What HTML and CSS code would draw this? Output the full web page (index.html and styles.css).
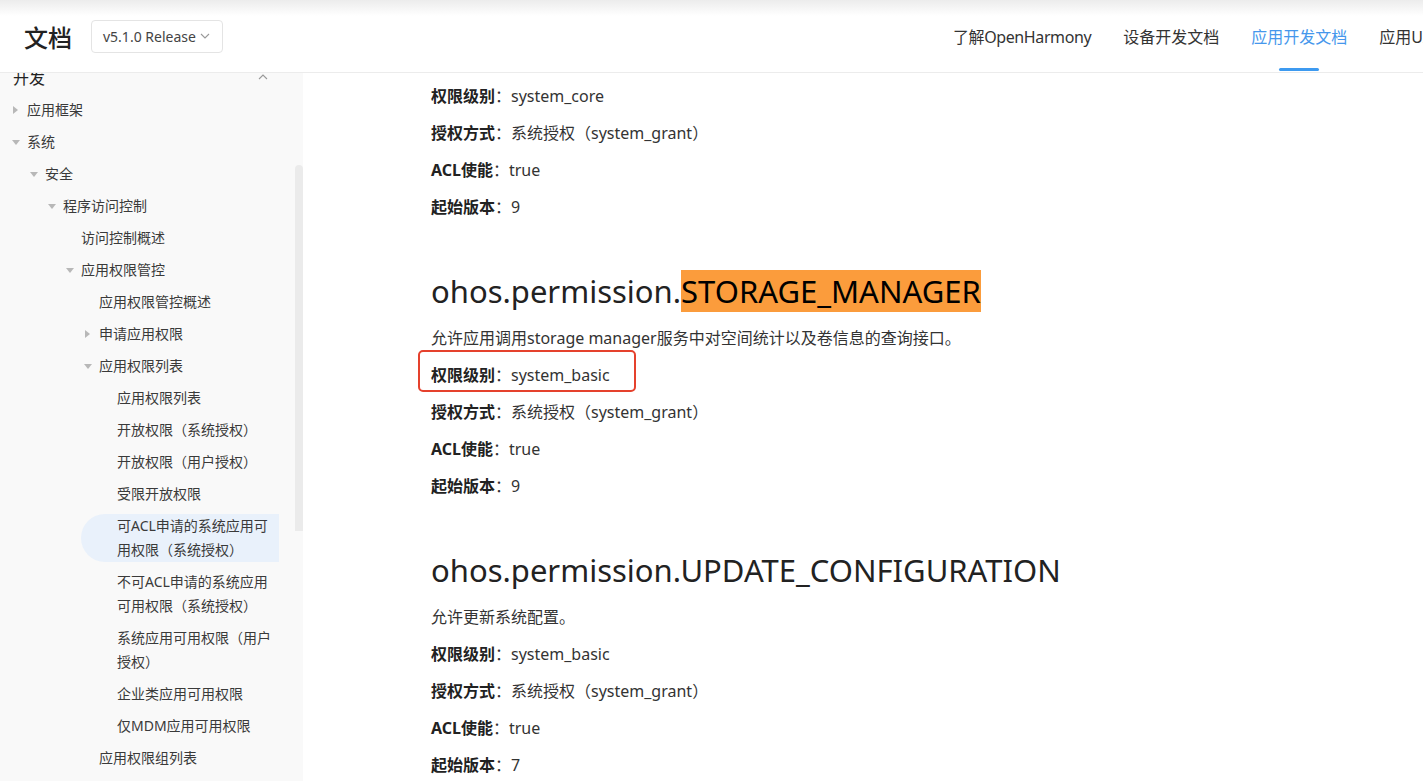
FILE: index.html
```html
<!DOCTYPE html>
<html lang="zh-CN">
  <head>
    <meta charset="UTF-8" />
    <meta name="viewport" content="width=device-width, initial-scale=1.0" />
    <title>应用权限列表 - 文档</title>
    <link rel="stylesheet" href="styles.css">
  </head>
  <body>
    <header class="topbar">
      <div class="brand">文档</div>
      <div class="version">
        <span>v5.1.0 Release</span>
        <svg width="10" height="6" viewBox="0 0 10 6"><path d="M1 1l4 4 4-4" fill="none" stroke="#999" stroke-width="1.1"/></svg>
      </div>
      <nav class="nav">
        <a href="#" class="latin">了解OpenHarmony</a>
        <a href="#">设备开发文档</a>
        <a href="#" class="active">应用开发文档</a>
        <a href="#">应用UX设计</a>
        <a href="#">API参考</a>
      </nav>
    </header>

    <div class="layout">
      <aside class="sidebar">
        <div class="tree">
          <div class="tree-head">
            <span>开发</span>
            <svg width="10" height="6" viewBox="0 0 10 6"><path d="M1 5l4-4 4 4" fill="none" stroke="#999" stroke-width="1.1"/></svg>
          </div>
          <div class="row lv1"><i class="arrow right"></i><span>应用框架</span></div>
          <div class="row lv1"><i class="arrow down"></i><span>系统</span></div>
          <div class="row lv2"><i class="arrow down"></i><span>安全</span></div>
          <div class="row lv3"><i class="arrow down"></i><span>程序访问控制</span></div>
          <div class="row lv4"><i class="arrow"></i><span>访问控制概述</span></div>
          <div class="row lv4"><i class="arrow down"></i><span>应用权限管控</span></div>
          <div class="row lv5"><i class="arrow"></i><span>应用权限管控概述</span></div>
          <div class="row lv5"><i class="arrow right"></i><span>申请应用权限</span></div>
          <div class="row lv5"><i class="arrow down"></i><span>应用权限列表</span></div>
          <div class="row lv6"><i class="arrow"></i><span>应用权限列表</span></div>
          <div class="row lv6"><i class="arrow"></i><span>开放权限（系统授权）</span></div>
          <div class="row lv6"><i class="arrow"></i><span>开放权限（用户授权）</span></div>
          <div class="row lv6"><i class="arrow"></i><span>受限开放权限</span></div>
          <div class="row lv6 selected"><i class="arrow"></i><span>可ACL申请的系统应用可用权限（系统授权）</span></div>
          <div class="row lv6"><i class="arrow"></i><span>不可ACL申请的系统应用可用权限（系统授权）</span></div>
          <div class="row lv6"><i class="arrow"></i><span>系统应用可用权限（用户授权）</span></div>
          <div class="row lv6"><i class="arrow"></i><span>企业类应用可用权限</span></div>
          <div class="row lv6"><i class="arrow"></i><span>仅MDM应用可用权限</span></div>
          <div class="row lv5"><i class="arrow"></i><span>应用权限组列表</span></div>
        </div>
        <div class="scrollbar"><div class="thumb"></div></div>
      </aside>

      <main class="content">
        <p><b>权限级别</b>：system_core</p>
        <p><b>授权方式</b>：系统授权（system_grant）</p>
        <p><b>ACL使能</b>：true</p>
        <p><b>起始版本</b>：9</p>

        <h2>ohos.permission.<mark>STORAGE_MANAGER</mark></h2>
        <p>允许应用调用storage manager服务中对空间统计以及卷信息的查询接口。</p>
        <p class="marked"><b>权限级别</b>：system_basic<span class="callout"></span></p>
        <p><b>授权方式</b>：系统授权（system_grant）</p>
        <p><b>ACL使能</b>：true</p>
        <p><b>起始版本</b>：9</p>

        <h2>ohos.permission.UPDATE_CONFIGURATION</h2>
        <p>允许更新系统配置。</p>
        <p><b>权限级别</b>：system_basic</p>
        <p><b>授权方式</b>：系统授权（system_grant）</p>
        <p><b>ACL使能</b>：true</p>
        <p><b>起始版本</b>：7</p>
      </main>
    </div>
  </body>
</html>
```

FILE: styles.css
```css
* {
  box-sizing: border-box;
}
html,
body {
  height: 100%;
}
body {
  margin: 0;
  overflow: hidden;
  font-family: "Noto Sans", "Noto Sans CJK SC", sans-serif;
  color: #333;
  background-color: #fff;
}
.topbar {
  display: flex;
  align-items: center;
  height: 73px;
  padding-left: 24px;
  background: linear-gradient(#ececec, #fff 16px);
  border-bottom: 1px solid #ececec;
  white-space: nowrap;
  overflow: hidden;
}
.brand {
  flex-shrink: 0;
  font-size: 24px;
  font-weight: 500;
  color: #222;
}
.version {
  display: flex;
  align-items: center;
  justify-content: space-between;
  flex-shrink: 0;
  width: 132px;
  height: 33px;
  margin-left: 19px;
  padding: 0 12px 0 11px;
  font-size: 14px;
  color: #444;
  border: 1px solid #e4e4e4;
  border-radius: 4px;
}
.nav {
  display: flex;
  gap: 32px;
  height: 100%;
  margin-left: 730px;
  flex-shrink: 0;
}
.nav a {
  position: relative;
  display: flex;
  align-items: center;
  font-size: 16px;
  color: #333;
  text-decoration: none;
}
.nav a.latin {
  letter-spacing: -0.4px;
}
.nav a.active {
  color: #4597ec;
}
.nav a.active::after {
  content: "";
  position: absolute;
  left: 50%;
  bottom: 1px;
  width: 40px;
  height: 3px;
  margin-left: -20px;
  border-radius: 2px;
  background-color: #3d9af0;
}
.layout {
  display: flex;
  height: calc(100% - 73px);
}
.sidebar {
  display: flex;
  width: 303px;
  flex-shrink: 0;
  background-color: #f9f9f9;
  overflow: hidden;
}
.tree {
  display: flex;
  flex-direction: column;
  gap: 8px;
  width: 295px;
  margin-top: -10px;
  padding-right: 16px;
  font-size: 14px;
  color: #3a3a3a;
}
.tree-head {
  display: flex;
  align-items: center;
  justify-content: space-between;
  height: 27px;
  padding: 0 11px 0 13px;
  font-size: 16px;
  color: #222;
}
.row {
  display: flex;
  line-height: 24px;
}
.row span {
  flex: 1;
  min-width: 0;
}
.lv1 { padding-left: 11px; }
.lv2 { padding-left: 29px; }
.lv3 { padding-left: 47px; }
.lv4 { padding-left: 65px; }
.lv5 { padding-left: 83px; }
.lv6 { padding-left: 101px; }
.row.selected {
  margin-left: 81px;
  padding-left: 20px;
  background-color: #e9f1fb;
  border-radius: 24px 0 0 24px;
}
.arrow {
  position: relative;
  width: 10px;
  margin-right: 6px;
  flex-shrink: 0;
}
.arrow.right::before,
.arrow.down::before {
  content: "";
  position: absolute;
  top: 50%;
  width: 0;
  height: 0;
}
.arrow.right::before {
  left: 2px;
  margin-top: -4px;
  border-top: 4px solid transparent;
  border-bottom: 4px solid transparent;
  border-left: 5px solid #b8b8b8;
}
.arrow.down::before {
  left: 1px;
  margin-top: -2px;
  border-left: 4px solid transparent;
  border-right: 4px solid transparent;
  border-top: 5px solid #b8b8b8;
}
.scrollbar {
  width: 8px;
  padding-top: 92px;
}
.thumb {
  height: 366px;
  border-radius: 4px 4px 0 0;
  background-color: #ebebeb;
}
.content {
  flex: 1;
  padding: 11px 0 0 128px;
  font-size: 16px;
  color: #333;
  overflow: hidden;
}
.content p {
  margin: 0 0 12px;
  line-height: 25px;
}
.content b {
  font-weight: 700;
  color: #222;
}
.content h2 {
  margin: 50px 0 14px;
  font-size: 31px;
  font-weight: 400;
  line-height: 42px;
  color: #222;
  white-space: nowrap;
}
.content h2 + p {
  margin-top: 0;
}
mark {
  background-color: #fb9c3c;
  color: #000;
}
.marked {
  position: relative;
}
.callout {
  position: absolute;
  left: -13px;
  top: -13px;
  width: 218px;
  height: 42px;
  border: 2px solid #e5412d;
  border-radius: 5px;
}
```
